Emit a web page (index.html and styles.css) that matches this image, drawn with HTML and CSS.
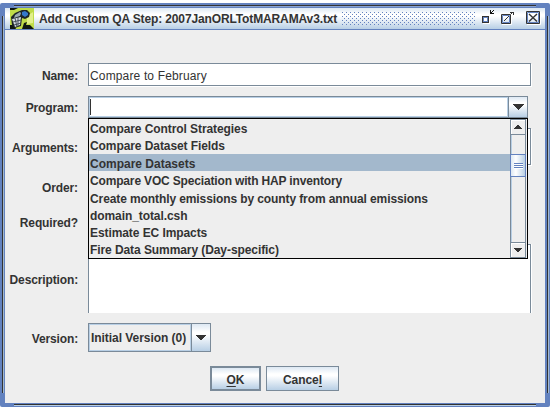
FILE: index.html
```html
<!DOCTYPE html>
<html lang="en">
<head>
<meta charset="utf-8">
<title>Add Custom QA Step</title>
<link rel="stylesheet" href="styles.css">
</head>
<body>
<main class="window">
  <i class="groove groove-top"></i><i class="groove groove-bottom"></i>
  <i class="groove groove-left"></i><i class="groove groove-right"></i>
  <header class="titlebar">
    <svg class="app-icon" width="24" height="21" viewBox="0 0 24 21">
      <path fill="#bfdc48" d="M0 0h24v21H0z"/>
      <path fill="#e2f08c" d="M17 8l6-4v11l-6 1z"/>
      <path fill="#101810" d="M0 0h8L4 2H0zM14 15l3-1-1 3h4l4 4H12zM0 17h4l2 4H0z"/>
      <path fill="#1c2428" d="M1 9l4-4 7-3 5 0 3 3-1 4-4 2-3-1-1 8-6 2-3-3z"/>
      <path fill="#3478cc" d="M12 4l3-1 3 2v2l-3 2-3-2z"/>
      <path fill="#99a9b0" d="M5 7l5-3 1 1-1 3-6 2z"/>
      <path fill="#d5dbe2" d="M2 11l9-2-1 8-5 2z"/>
      <path fill="none" stroke="#39444e" stroke-width=".9" d="M5 10l2 9M8 9.500v9M3 14l8-2M4 17l7-2"/>
    </svg>
    <h1 class="title">Add Custom QA Step: 2007JanORLTotMARAMAv3.txt</h1>
    <span class="bumps"></span>
    <svg class="controls" width="60" height="18" viewBox="0 0 60 18">
      <path fill="#fff" d="M2 8h7v7H2z"/>
      <path fill="#333" d="M1 7h7v7H1z"/>
      <path fill="#6382bf" d="M2 8h5v5H2z"/>
      <path fill="#fff" d="M3 9h3v3H3z"/>
      <path fill="#111" d="M9 1h1v3h3v1H9zM10 3h1v1h-1zM11 2h1v1h-1zM12 1h1v1h-1z"/>
      <path fill="none" stroke="#333" d="M20.500 5.500h9v9h-9z"/>
      <path fill="none" stroke="#6382bf" d="M21.500 6.500h7v7h-7z"/>
      <path fill="none" stroke="#fff" d="M21 15.500h9.500V6"/>
      <path fill="#333" d="M23 11h1v-1h1V9h1V8h1V7h1v1h-1v1h-1v1h-1v1h-1v1h-1zM29 3h4v3h-1V4h-3zM30 4h1v1h-1z"/>
      <path fill="none" stroke="#333" d="M45.500 2.500h13v12h-13z"/>
      <path fill="none" stroke="#6382bf" d="M46.500 13.500v-10h11v10z"/>
      <path fill="none" stroke="#fff" d="M46 15.500h13.500V3"/>
      <path fill="none" stroke="#333" stroke-width="1.400" d="M48 5l8 7.500M56 5L48 12.500"/>
    </svg>
  </header>
  <form class="form">
    <div class="row row-name"><label>Name:</label><div class="field text">Compare to February</div></div>
    <div class="row row-program"><label>Program:</label>
      <div class="combo program"><span class="value"><i class="caret"></i></span><span class="drop"><svg width="11" height="6" shape-rendering="crispEdges"><path fill="#333" d="M0 0h11v1H0zM1 1h9v1H1zM2 2h7v1H2zM3 3h5v1H3zM4 4h3v1H4zM5 5h1v1H5z"/></svg></span>
        <div class="popup">
          <ul class="options">
            <li class="o1">Compare Control Strategies</li>
            <li class="o2">Compare Dataset Fields</li>
            <li class="o3 selected">Compare Datasets</li>
            <li class="o4">Compare VOC Speciation with HAP inventory</li>
            <li class="o5">Create monthly emissions by county from annual emissions</li>
            <li class="o6">domain_total.csh</li>
            <li class="o7">Estimate EC Impacts</li>
            <li class="o8">Fire Data Summary (Day-specific)</li>
          </ul>
          <div class="scrollbar">
            <span class="arrow"><svg width="8" height="4" shape-rendering="crispEdges"><path fill="#333" d="M3 0h2v1H3zM2 1h4v1H2zM1 2h6v1H1zM0 3h8v1H0z"/></svg></span>
            <span class="track track-a"></span>
            <span class="thumb"></span>
            <span class="track track-b"></span>
            <span class="arrow"><svg width="8" height="4" shape-rendering="crispEdges"><path fill="#333" d="M0 0h8v1H0zM1 1h6v1H1zM2 2h4v1H2zM3 3h2v1H3z"/></svg></span>
          </div>
        </div>
      </div>
    </div>
    <div class="row row-arguments"><label>Arguments:</label><div class="field"></div></div>
    <div class="row row-order"><label>Order:</label></div>
    <div class="row row-required"><label>Required?</label></div>
    <div class="row row-description"><label>Description:</label><div class="field"></div></div>
    <div class="row row-version"><label>Version:</label><div class="combo version"><span class="value">Initial Version (0)</span><span class="drop"><svg width="10" height="5" shape-rendering="crispEdges"><path fill="#333" d="M0 0h10v1H0zM1 1h8v1H1zM2 2h6v1H2zM3 3h4v1H3zM4 4h2v1H4z"/></svg></span></div></div>
    <div class="buttons"><button type="button" class="ok"><u>O</u>K</button><button type="button" class="cancel">Cance<u>l</u></button></div>
  </form>
</main>
</body>
</html>
```
FILE: styles.css
```css
* { box-sizing: border-box; }
body { margin: 0; padding-top: 3px; background: #fff; color: #333; font: bold 12px/14px "Liberation Sans", Arial, sans-serif; overflow: hidden; }
.window { position: relative; width: 550px; height: 404px; padding: 5px 5px 4px; background: #6382bf; border-radius: 2px; }
.groove { position: absolute; background: #333; }
.groove-top { left: 14px; right: 14px; top: 2px; height: 1px; box-shadow: 0 1px #8aa3d2; }
.groove-bottom { left: 14px; right: 14px; bottom: 2px; height: 1px; box-shadow: 0 1px #b8cfe5; }
.groove-left { left: 2px; top: 13px; bottom: 14px; width: 1px; box-shadow: 1px 0 #a3b8cc; }
.groove-right { right: 2px; top: 13px; bottom: 14px; width: 1px; box-shadow: 1px 0 #a3b8cc; }
.titlebar { display: flex; align-items: flex-start; height: 22px; padding-left: 5px; border-bottom: 1px solid #6382bf; background: linear-gradient(#dde8f3, #fff 30%, #fff 38%, #b8cfe5); }
.app-icon { flex: none; }
.title { margin: 4px 0 0 5px; width: 299px; flex: none; font-size: 12px; line-height: 14px; letter-spacing: -.13px; white-space: nowrap; }
.bumps { width: 134px; height: 14px; margin: 4px 5px 0 4px; flex: none; background: radial-gradient(circle at .5px .5px, #6382bf .6px, transparent .7px) 0 0 / 4px 4px, radial-gradient(circle at .5px .5px, #6382bf .6px, transparent .7px) 2px 2px / 4px 4px; }
.controls { flex: none; margin-top: 1px; }
.form { height: 373px; padding: 33px 0 0; background: #eee; }
.row { display: flex; gap: 10px; align-items: center; }
.row label { width: 73px; padding-top: 2px; text-align: right; letter-spacing: -.13px; white-space: nowrap; flex: none; }
.field { width: 443px; height: 100%; background: #fff; border: 1px solid #7a8a99; box-shadow: 1px 1px #fff; }
.text { font-weight: normal; padding: 5px 1px; line-height: 14px; letter-spacing: .15px; }
.row-name { height: 23px; }
.row-program { height: 22px; margin-top: 10px; }
.row-program > label { padding-top: 1px; }
.row-arguments { height: 37px; margin-top: 10px; }
.row-order { height: 14px; margin-top: 16px; }
.row-required { height: 14px; margin-top: 21px; }
.row-order > label, .row-required > label { padding-top: 0; }
.row-description { height: 69px; margin-top: 14px; }
.row-description .field { border-bottom: 0; box-shadow: 1px 0 #fff; }
.row-version { height: 29px; margin-top: 10px; }
.combo { position: relative; display: flex; height: 100%; border: 1px solid #7a8a99; }
.combo .value { flex: 1; border: 1px solid #b8cfe5; }
.program { width: 440px; }
.program .value { background: #fff; padding: 1px 0; }
.caret { display: block; width: 1px; height: 16px; background: #333; }
.drop { width: 19px; border-left: 1px solid #7a8a99; display: flex; align-items: center; justify-content: center; background: linear-gradient(#dde8f3, #fff 30%, #fff 38%, #b8cfe5); }
.version { width: 123px; }
.version .value { padding: 6px 1px; letter-spacing: -.05px; white-space: nowrap; }
.popup { position: absolute; z-index: 2; left: -1px; top: 21px; width: 440px; height: 141px; border: 1px solid #000; background: #eee; display: flex; }
.options { list-style: none; margin: 0; padding: 0; flex: 1; display: grid; grid-template-rows: repeat(8, 1fr); }
.options li { padding-left: 1px; line-height: 20px; min-height: 0; letter-spacing: -.08px; white-space: nowrap; }
.options .selected { background: #a3b8cc; letter-spacing: 0; }
.options .o4 { letter-spacing: -.16px; }
.options .o5 { letter-spacing: -.1px; }
.options .o8 { line-height: 18px; }
.scrollbar { width: 17px; display: flex; flex-direction: column; border-left: 1px solid #7a8a99; padding-right: 1px; }
.arrow { height: 16px; display: flex; align-items: center; justify-content: center; border: 1px solid #7a8a99; border-left: 0; box-shadow: inset 1px 1px #fff; }
.track { border-left: 1px solid #b8cfe5; border-right: 1px solid #7a8a99; }
.track-a { height: 19px; }
.track-b { flex: 1; }
.thumb { height: 23px; margin-left: -1px; border: 1px solid #6382bf; background: linear-gradient(#6382bf 1px, #fff 1px 2px, #6382bf 2px 3px, #fff 3px 4px, #6382bf 4px 5px, #fff 5px) 50% 8px / 9px 6px no-repeat, linear-gradient(90deg, #dde8f3, #fff 35%, #b8cfe5); }
.options { height: 139px; }
.buttons { display: flex; gap: 5px; margin: 14px 0 0 205px; }
.buttons button { height: 25px; padding: 2px 0 0; color: #333; font: inherit; border: 1px solid #7a8a99; border-radius: 0; background: linear-gradient(#dde8f3, #fff 30%, #fff 38%, #b8cfe5); }
.buttons u { text-underline-offset: 2px; text-decoration-thickness: 1px; }
.buttons .ok { width: 51px; border-width: 2px; }
.buttons .cancel { width: 73px; letter-spacing: -.05px; }
```
